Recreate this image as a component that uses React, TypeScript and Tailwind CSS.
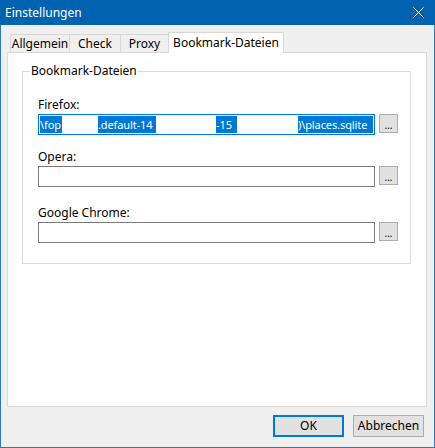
import { ReactNode } from "react";

const tabs = [
    { label: "Allgemein", w: "w-[60px]" },
    { label: "Check", w: "w-[52px]" },
    { label: "Proxy", w: "w-[49px]" },
];

function BrowseButton() {
    return (
        <button className="w-[19px] h-[19px] shrink-0 flex items-end justify-center pb-[2px] border border-[#adadad] bg-[#e1e1e1] text-[10px] leading-[10px] text-black">
            ...
        </button>
    );
}

function FileRow({ label, focused, className, children }: { label: string; focused?: boolean; className: string; children?: ReactNode }) {
    return (
        <div className={className}>
            <div className="leading-[16px] h-[16px]">{label}</div>
            <div className="mt-px flex gap-[4px]">
                <div className={`h-[21px] w-[337px] border ${focused ? "border-[#0078d7]" : "border-[#7a7a7a]"} bg-white p-px overflow-hidden`}>
                    {children}
                </div>
                <BrowseButton />
            </div>
        </div>
    );
}

function Sel({ w, children }: { w: string; children: ReactNode }) {
    return <span className={`${w} h-full shrink-0 bg-[#0078d7] text-white text-[11px] tracking-[-0.1px] whitespace-nowrap overflow-hidden leading-[17px]`}>{children}</span>;
}

function Gap({ w }: { w: string }) {
    return <span className={`${w} h-full shrink-0 bg-white`} />;
}

export default function App() {
    return (
        <div className="w-[435px] h-[448px] flex flex-col bg-[#f0f0f0] border-x border-b border-[#2a78c4] text-[12px] text-black font-['Noto_Sans',sans-serif]">
            <div className="h-[25px] shrink-0 -mx-px bg-[#0063b1] flex items-center justify-between pl-[5px] pr-[11px] text-white">
                <span className="leading-[16px]">Einstellungen</span>
                <svg width="11" height="11" viewBox="0 0 11 11" className="shrink-0">
                    <path d="M0.5 0.5 L10.5 10.5 M10.5 0.5 L0.5 10.5" stroke="white" strokeWidth="1" />
                </svg>
            </div>

            <div className="pt-[7px] pl-[6px]">
                <div className="h-[20px] flex items-end pl-[3px]">
                    {tabs.map((t, i) => (
                        <div key={t.label} className={`${t.w} h-[18px] ${i > 0 ? "-ml-px" : ""} border border-b-0 border-[#d9d9d9] bg-[#f0f0f0] flex items-center justify-center leading-[16px]`}>
                            {t.label}
                        </div>
                    ))}
                    <div className="w-[116px] h-[21px] -ml-px -mb-px relative z-10 border border-b-0 border-[#d9d9d9] bg-white flex items-center justify-center leading-[16px] pb-px">
                        Bookmark-Dateien
                    </div>
                </div>

                <div className="w-[420px] h-[355px] border border-[#d9d9d9] bg-white">
                    <fieldset className="ml-[14px] mt-[10px] w-[389px] border border-[#dcdcdc] px-0">
                        <legend className="ml-[7px] px-px leading-[16px]">Bookmark-Dateien</legend>
                        <div className="pl-[15px] pb-[20px]">
                            <FileRow label="Firefox:" focused className="mt-[18px]">
                                <div className="flex h-full">
                                    <Sel w="w-[22px]">\fop</Sel>
                                    <Gap w="w-[36px]" />
                                    <Sel w="w-[58px]">.default-14</Sel>
                                    <Gap w="w-[60px]" />
                                    <Sel w="w-[21px]">-15</Sel>
                                    <Gap w="w-[61px]" />
                                    <Sel w="w-[75px]">)\places.sqlite</Sel>
                                </div>
                            </FileRow>
                            <FileRow label="Opera:" className="mt-[14px]" />
                            <FileRow label="Google Chrome:" className="mt-[18px]" />
                        </div>
                    </fieldset>
                </div>
            </div>

            <div className="flex justify-end gap-[9px] mt-[8px] pr-[10px]">
                <button className="w-[71px] h-[22px] border-2 border-[#0078d7] bg-[#e1e1e1] leading-[16px]">OK</button>
                <button className="w-[71px] h-[22px] border border-[#adadad] bg-[#e1e1e1] leading-[16px]">Abbrechen</button>
            </div>
        </div>
    );
}
